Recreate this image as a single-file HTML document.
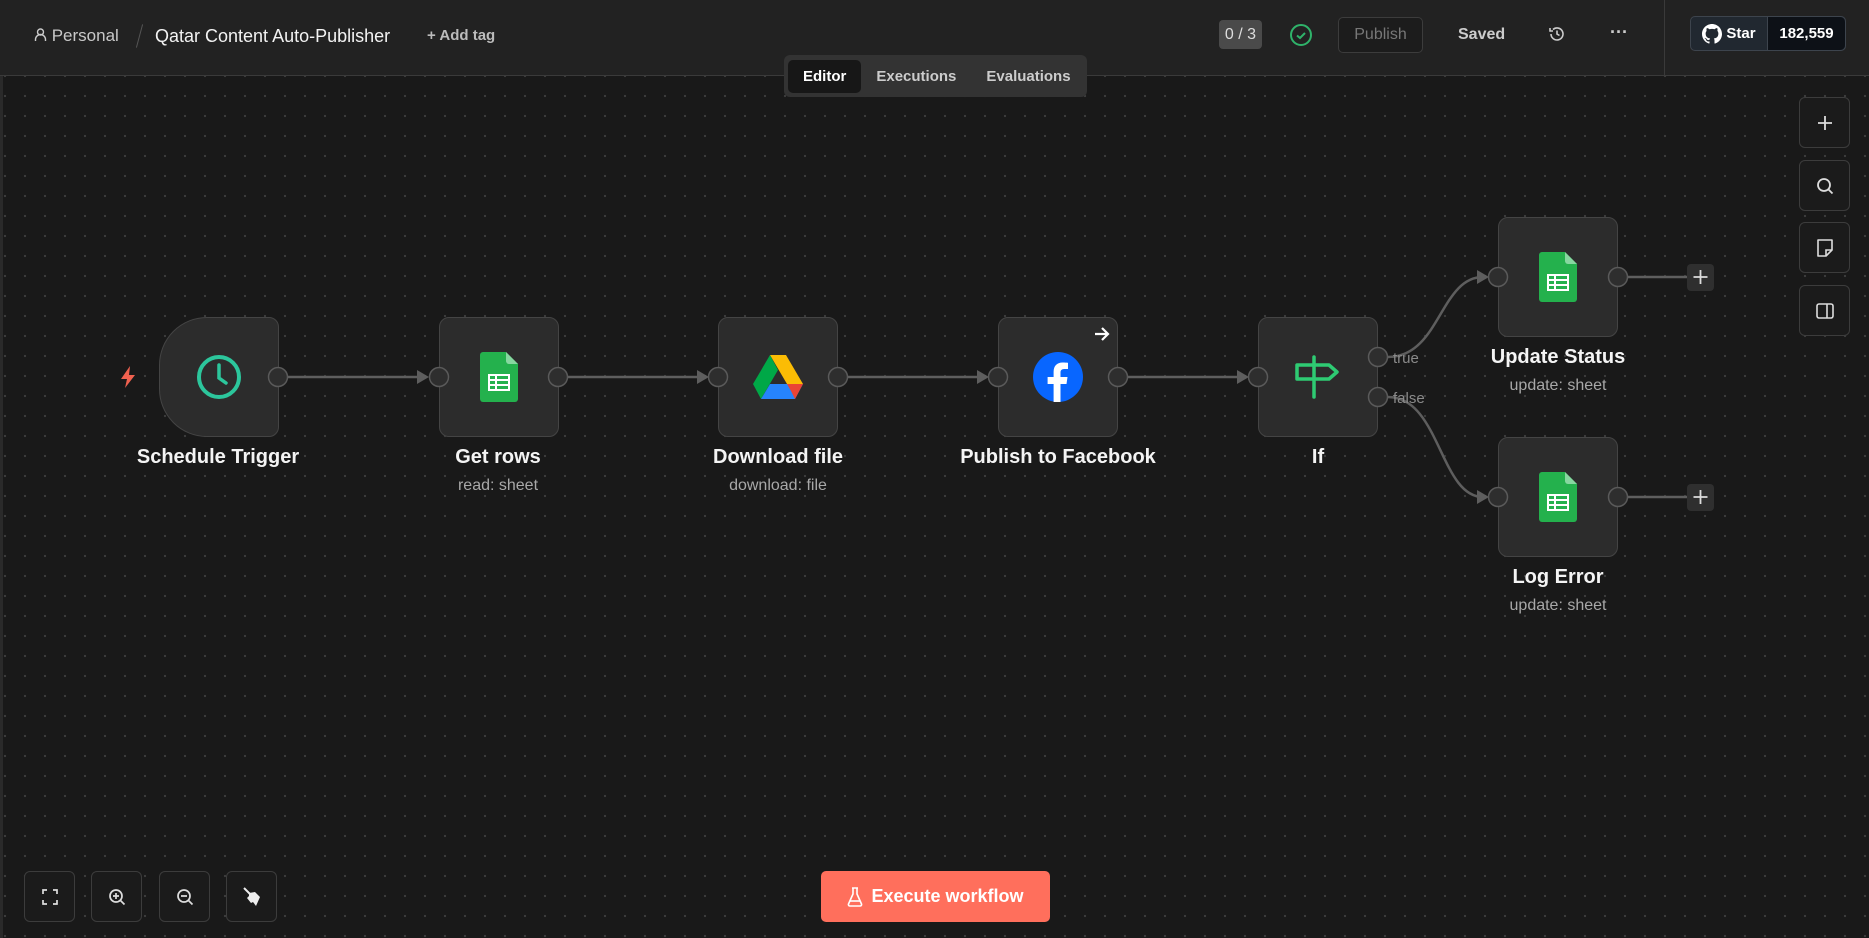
<!DOCTYPE html>
<html><head><meta charset="utf-8"><style>
*{box-sizing:border-box;margin:0;padding:0}
body{width:1869px;height:938px;overflow:hidden;background:#171717;font-family:"Liberation Sans",sans-serif;color:#fff;position:relative}
.canvas{position:absolute;left:0;top:76px;width:1869px;height:862px;background-color:#191919;background-image:radial-gradient(circle,#3d3d3d 1px,transparent 1.3px);background-size:20px 20px;background-position:12px 10px;border-left:3px solid #2a2a2a}
.hdr{position:absolute;left:0;top:0;width:1869px;height:76px;background:#222;border-bottom:1px solid #3a3a3a}
.abs{position:absolute}
.node{position:absolute;width:120px;height:120px;background:#2c2c2c;border:1.5px solid #444;border-radius:10px;display:flex;align-items:center;justify-content:center}
.lbl{position:absolute;width:300px;text-align:center;font-size:20px;font-weight:bold;color:#f4f4f4}
.sub{position:absolute;width:300px;text-align:center;font-size:16px;color:#a8a8a8}
.btn{position:absolute;width:51px;height:51px;border:1px solid #3c3c3c;border-radius:6px;background:#1b1b1b;display:flex;align-items:center;justify-content:center}
.tabs{position:absolute;left:784px;top:55px;width:303px;height:42px;background:#333;border-radius:6px;display:flex;align-items:center;padding:0 4px;font-size:15px;font-weight:bold;color:#ccc}
.tabs div{padding:8px 15px;border-radius:5px}
</style></head><body>
<div class="hdr">
 <div class="abs" style="left:34px;top:26px;font-size:17px;color:#c8c8c8"><svg width="13" height="14" viewBox="0 0 13 14" style="vertical-align:-1px"><circle cx="6.5" cy="4" r="3" fill="none" stroke="#ccc" stroke-width="1.4"/><path d="M1.5 13v-1.5a5 5 0 0 1 10 0V13" fill="none" stroke="#ccc" stroke-width="1.4"/></svg> Personal</div>
 <div class="abs" style="left:139px;top:24px;width:1px;height:24px;background:#555;transform:rotate(15deg)"></div>
 <div class="abs" style="left:155px;top:26px;font-size:18px;color:#f2f2f2">Qatar Content Auto-Publisher</div>
 <div class="abs" style="left:427px;top:27px;font-size:15px;font-weight:bold;color:#bbb">+ Add tag</div>
 <div class="abs" style="left:1219px;top:20px;width:43px;height:29px;background:#4a4a4a;border-radius:4px;font-size:16px;color:#ddd;text-align:center;line-height:29px">0 / 3</div>
 <svg class="abs" style="left:1289px;top:23px" width="24" height="24"><circle cx="12" cy="12" r="10" fill="none" stroke="#2fb36a" stroke-width="2"/><path d="M8 12.5l3 2.5 5-5" fill="none" stroke="#2fb36a" stroke-width="2"/></svg>
 <div class="abs" style="left:1338px;top:17px;width:85px;height:36px;border:1px solid #3c3c3c;border-radius:5px;background:#1c1c1c;color:#777;font-size:16px;text-align:center;line-height:34px">Publish</div>
 <div class="abs" style="left:1458px;top:26px;font-size:16px;font-weight:bold;color:#ccc">Saved</div>
 <svg class="abs" style="left:1548px;top:25px" width="18" height="18" viewBox="0 0 18 18"><path d="M3 9a6 6 0 1 0 2-4.5" fill="none" stroke="#ccc" stroke-width="1.6"/><path d="M2 3v3h3" fill="none" stroke="#ccc" stroke-width="1.6"/><path d="M9 5.5V9l2.5 1.5" fill="none" stroke="#ccc" stroke-width="1.6"/></svg>
 <div class="abs" style="left:1610px;top:22px;font-size:18px;color:#ccc;font-weight:bold">···</div>
 <div class="abs" style="left:1664px;top:0;width:1px;height:75px;background:#3a3a3a"></div>
 <div class="abs" style="left:1690px;top:16px;width:156px;height:35px;border:1px solid #3d444d;border-radius:5px;background:#212830;display:flex;font-size:15px;font-weight:bold">
  <div style="width:77px;display:flex;align-items:center;justify-content:center;gap:4px;border-right:1px solid #3d444d"><svg width="20" height="20" viewBox="0 0 16 16"><path fill="#fff" d="M8 0C3.58 0 0 3.58 0 8c0 3.54 2.29 6.53 5.47 7.59.4.07.55-.17.55-.38v-1.33c-2.23.48-2.7-1.07-2.7-1.07-.36-.92-.89-1.17-.89-1.17-.73-.5.05-.49.05-.49.8.06 1.23.83 1.23.83.72 1.22 1.87.87 2.33.66.07-.52.28-.87.51-1.07-1.78-.2-3.65-.89-3.65-3.95 0-.87.31-1.59.82-2.15-.08-.2-.36-1.02.08-2.12 0 0 .67-.21 2.2.82a7.6 7.6 0 0 1 4 0c1.53-1.04 2.2-.82 2.2-.82.44 1.1.16 1.92.08 2.12.51.56.82 1.27.82 2.15 0 3.07-1.87 3.75-3.65 3.95.29.25.54.73.54 1.48v2.2c0 .21.15.46.55.38A8 8 0 0 0 16 8c0-4.42-3.58-8-8-8z"/></svg>Star</div>
  <div style="flex:1;display:flex;align-items:center;justify-content:center;background:#0d1117;border-radius:0 5px 5px 0">182,559</div>
 </div>
</div>
<div class="canvas"></div>
<div class="tabs"><div style="background:#171717;color:#fff">Editor</div><div>Executions</div><div>Evaluations</div></div>

<svg class="abs" style="left:0;top:0" width="1869" height="938">
 <g stroke="#5e5e5e" stroke-width="2.5" fill="none">
  <path d="M288 377H424"/><path d="M568 377H703"/><path d="M848 377H983"/><path d="M1128 377H1243"/>
  <path d="M1388 357C1440 357 1440 277 1483 277"/><path d="M1388 397C1440 397 1440 497 1483 497"/>
  <path d="M1628 277H1687"/><path d="M1628 497H1687"/>
 </g>
 <g fill="#5e5e5e"><path d="M429 377l-12-7v14z"/><path d="M709 377l-12-7v14z"/><path d="M989 377l-12-7v14z"/><path d="M1249 377l-12-7v14z"/><path d="M1489 277l-12-7v14z"/><path d="M1489 497l-12-7v14z"/></g>
</svg>

<svg class="abs" style="left:119px;top:365px" width="18" height="24" viewBox="0 0 18 24"><path d="M11 1L2 14h6l-2 9 10-13h-6z" fill="#f0614f"/></svg>
<div class="node" style="left:159px;top:317px;border-radius:48px 10px 10px 48px"><svg width="48" height="48"><circle cx="24" cy="24" r="20" fill="none" stroke="#2cc69c" stroke-width="4"/><path d="M24 12v13l7 5" fill="none" stroke="#2cc69c" stroke-width="3.5" stroke-linecap="round"/></svg></div>
<div class="node" style="left:439px;top:317px" id="gs"><svg width="38" height="50" viewBox="0 0 38 50"><path d="M3 0h23l12 12v35a3 3 0 0 1-3 3H3a3 3 0 0 1-3-3V3a3 3 0 0 1 3-3z" fill="#24b14d"/><path d="M26 0l12 12H29a3 3 0 0 1-3-3z" fill="#87d7a0"/><rect x="9" y="23" width="20" height="15" fill="none" stroke="#fff" stroke-width="2"/><path d="M9 28h20M9 33h20M16 23v15" stroke="#fff" stroke-width="2"/></svg></div>
<div class="node" style="left:718px;top:317px"><svg width="50" height="44" viewBox="0 0 50 44"><path d="M17 0h16l17 29H34z" fill="#fbbc04"/><path d="M17 0L0 29l8 15 17-29z" fill="#00a847"/><path d="M8 44h34l8-15H17z" fill="#2684fc"/><path d="M42 44l8-15H34l4 7z" fill="#ea4335"/></svg></div>
<div class="node" style="left:998px;top:317px"><svg width="52" height="52"><circle cx="26" cy="26" r="25" fill="#0866ff"/><path d="M28.5 51V33h6l1-7h-7v-4.5c0-2 1-3.5 3.8-3.5H36v-6.2c-.7-.1-3-.3-5.4-.3-5.4 0-9 3.2-9 9.2V26h-6v7h6v18z" fill="#fff"/></svg>
 <svg class="abs" style="right:6px;top:8px" width="18" height="16"><path d="M2 8h13M9 2l6 6-6 6" fill="none" stroke="#fff" stroke-width="2.2"/></svg></div>
<div class="node" style="left:1258px;top:317px"><svg width="48" height="44" viewBox="0 0 48 44"><path d="M20 2v40" stroke="#2ecb73" stroke-width="3.5" stroke-linecap="round"/><path d="M3 10h32l8 7-8 7H3z" fill="none" stroke="#2ecb73" stroke-width="3.5" stroke-linejoin="round"/></svg></div>
<div class="node" style="left:1498px;top:217px"><svg width="38" height="50" viewBox="0 0 38 50"><path d="M3 0h23l12 12v35a3 3 0 0 1-3 3H3a3 3 0 0 1-3-3V3a3 3 0 0 1 3-3z" fill="#24b14d"/><path d="M26 0l12 12H29a3 3 0 0 1-3-3z" fill="#87d7a0"/><rect x="9" y="23" width="20" height="15" fill="none" stroke="#fff" stroke-width="2"/><path d="M9 28h20M9 33h20M16 23v15" stroke="#fff" stroke-width="2"/></svg></div>
<div class="node" style="left:1498px;top:437px"><svg width="38" height="50" viewBox="0 0 38 50"><path d="M3 0h23l12 12v35a3 3 0 0 1-3 3H3a3 3 0 0 1-3-3V3a3 3 0 0 1 3-3z" fill="#24b14d"/><path d="M26 0l12 12H29a3 3 0 0 1-3-3z" fill="#87d7a0"/><rect x="9" y="23" width="20" height="15" fill="none" stroke="#fff" stroke-width="2"/><path d="M9 28h20M9 33h20M16 23v15" stroke="#fff" stroke-width="2"/></svg></div>

<svg class="abs" style="left:0;top:0" width="1869" height="938">
 <g fill="#2e2e2e" stroke="#5a5a5a" stroke-width="1.5">
  <circle cx="278" cy="377" r="9.5"/><circle cx="439" cy="377" r="9.5"/><circle cx="558" cy="377" r="9.5"/><circle cx="718" cy="377" r="9.5"/><circle cx="838" cy="377" r="9.5"/><circle cx="998" cy="377" r="9.5"/><circle cx="1118" cy="377" r="9.5"/><circle cx="1258" cy="377" r="9.5"/><circle cx="1378" cy="357" r="9.5"/><circle cx="1378" cy="397" r="9.5"/><circle cx="1498" cy="277" r="9.5"/><circle cx="1618" cy="277" r="9.5"/><circle cx="1498" cy="497" r="9.5"/><circle cx="1618" cy="497" r="9.5"/>
 </g>
 <g stroke="#5a5a5a" stroke-width="1.5"><path d="M1388 357h6M1388 397h6"/></g>
 <text x="1393" y="363" font-family="Liberation Sans" font-size="15" fill="#8a8a8a">true</text>
 <text x="1393" y="403" font-family="Liberation Sans" font-size="15" fill="#8a8a8a">false</text>
 <rect x="1687" y="264" width="27" height="27" rx="4" fill="#2f2f2f"/><path d="M1700.5 270v14M1693.5 277h14" stroke="#ddd" stroke-width="1.8"/>
 <rect x="1687" y="484" width="27" height="27" rx="4" fill="#2f2f2f"/><path d="M1700.5 490v14M1693.5 497h14" stroke="#ddd" stroke-width="1.8"/>
</svg>

<div class="lbl" style="left:68px;top:446px">Schedule Trigger</div>
<div class="lbl" style="left:348px;top:446px">Get rows</div><div class="sub" style="left:348px;top:477px">read: sheet</div>
<div class="lbl" style="left:628px;top:446px">Download file</div><div class="sub" style="left:628px;top:477px">download: file</div>
<div class="lbl" style="left:908px;top:446px">Publish to Facebook</div>
<div class="lbl" style="left:1168px;top:446px">If</div>
<div class="lbl" style="left:1408px;top:346px">Update Status</div><div class="sub" style="left:1408px;top:377px">update: sheet</div>
<div class="lbl" style="left:1408px;top:566px">Log Error</div><div class="sub" style="left:1408px;top:597px">update: sheet</div>

<div class="btn" style="left:1799px;top:97px"><svg width="18" height="18"><path d="M9 2v14M2 9h14" stroke="#ddd" stroke-width="1.8"/></svg></div>
<div class="btn" style="left:1799px;top:160px"><svg width="20" height="20"><circle cx="9" cy="9" r="6" fill="none" stroke="#ddd" stroke-width="1.8"/><path d="M13.5 13.5l4 4" stroke="#ddd" stroke-width="1.8"/></svg></div>
<div class="btn" style="left:1799px;top:222px"><svg width="18" height="20"><path d="M2 2h14v10l-6 6H2z" fill="none" stroke="#ddd" stroke-width="1.6" stroke-linejoin="round"/><path d="M10 18v-6h6" fill="none" stroke="#ddd" stroke-width="1.6"/></svg></div>
<div class="btn" style="left:1799px;top:285px"><svg width="20" height="20"><rect x="2" y="3" width="16" height="14" rx="2" fill="none" stroke="#ddd" stroke-width="1.6"/><path d="M12 3v14" stroke="#ddd" stroke-width="1.6"/></svg></div>

<div class="btn" style="left:24px;top:871px"><svg width="18" height="18"><path d="M2 6V2h4M12 2h4v4M16 12v4h-4M6 16H2v-4" fill="none" stroke="#ddd" stroke-width="1.7"/></svg></div>
<div class="btn" style="left:91px;top:871px"><svg width="20" height="20"><circle cx="9" cy="9" r="6" fill="none" stroke="#ddd" stroke-width="1.7"/><path d="M13.5 13.5l4 4M9 6v6M6 9h6" stroke="#ddd" stroke-width="1.7"/></svg></div>
<div class="btn" style="left:159px;top:871px"><svg width="20" height="20"><circle cx="9" cy="9" r="6" fill="none" stroke="#ddd" stroke-width="1.7"/><path d="M13.5 13.5l4 4M6 9h6" stroke="#ddd" stroke-width="1.7"/></svg></div>
<div class="btn" style="left:226px;top:871px"><svg width="22" height="22" viewBox="0 0 22 22"><path d="M3 2l6 6" stroke="#eee" stroke-width="2"/><path d="M8 7l6-1 5 5-4 9-3-4-2 1-4-5 2-2z" fill="#eee"/></svg></div>

<div class="abs" style="left:821px;top:871px;width:229px;height:51px;background:#ff6f5c;border-radius:5px;display:flex;align-items:center;justify-content:center;gap:8px;font-size:18px;font-weight:bold;color:#fff">
 <svg width="16" height="20" viewBox="0 0 16 20"><path d="M5 1h6M6 1v6L1.5 17a1.5 1.5 0 0 0 1.4 2h10.2a1.5 1.5 0 0 0 1.4-2L10 7V1" fill="none" stroke="#fff" stroke-width="1.6" stroke-linejoin="round"/><path d="M3 14h10" stroke="#fff" stroke-width="1.6"/></svg>Execute workflow</div>
</body></html>
